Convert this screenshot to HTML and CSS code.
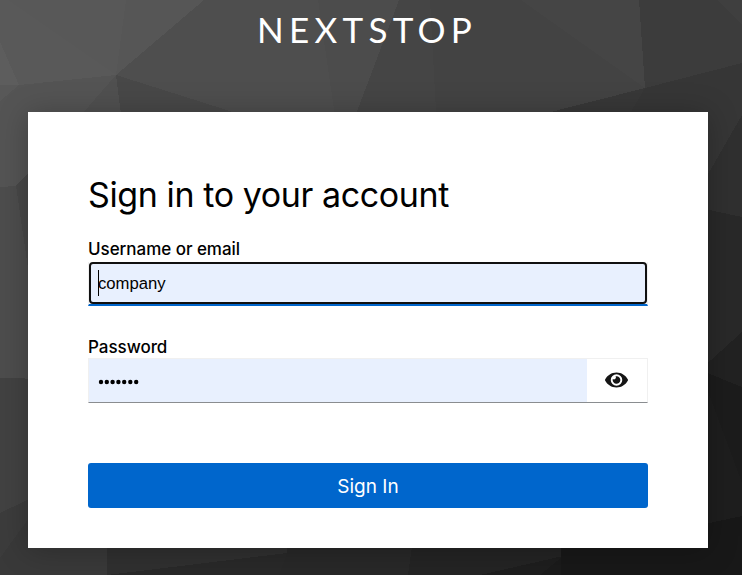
FILE: index.html
```html
<!DOCTYPE html>
<html lang="en">
<head>
<meta charset="utf-8">
<title>Sign in to NextStop</title>
<link rel="stylesheet" href="styles.css">
</head>
<body>
<svg class="backdrop" viewBox="0 0 742 575" shape-rendering="crispEdges" aria-hidden="true">
  <rect width="742" height="575" fill="#303030"/>
  <path fill="#595959" d="M0 0H8L116 75L19 85L0 42Z"/>
  <path fill="#5d5d5d" d="M0 42L19 85H0Z"/>
  <path fill="#585858" d="M8 0H126L116 75Z"/>
  <path fill="#565656" d="M126 0H204L116 75Z"/>
  <path fill="#4e4e4e" d="M204 0H318L337 130H290L116 75Z"/>
  <path fill="#4c4c4c" d="M318 0H399L350 130H337Z"/>
  <path fill="#454545" d="M399 0H430L437 130H350Z"/>
  <path fill="#434343" d="M430 0H521L645 88L480 130H437Z"/>
  <path fill="#454545" d="M521 0H639L645 88Z"/>
  <path fill="#3c3c3c" d="M639 0H717L742 24V63L645 88Z"/>
  <path fill="#3f3f3f" d="M717 0H742V24Z"/>
  <path fill="#383838" d="M645 88L620 130H480Z"/>
  <path fill="#363636" d="M645 88L742 63V115L700 188L665 130H620Z"/>
  <path fill="#484848" d="M116 75L290 130H123Z"/>
  <path fill="#505050" d="M116 75L123 130H68Z"/>
  <path fill="#545454" d="M19 85L116 75L68 130L16 186L0 187V101Z"/>
  <path fill="#585858" d="M0 85H19L0 101Z"/>
  <path fill="#4d4d4d" d="M0 187L16 186L40 350V379L0 378Z"/>
  <path fill="#484848" d="M16 186L50 150V350H40Z"/>
  <path fill="#424242" d="M0 378L50 379V489L0 513Z"/>
  <path fill="#3c3c3c" d="M0 513L50 489L0 558Z"/>
  <path fill="#393939" d="M0 558L50 489L107 535V575H0Z"/>
  <path fill="#303030" d="M107 530H387L287 553L107 574Z"/>
  <path fill="#292929" d="M107 575L287 553L279 575Z"/>
  <path fill="#282828" d="M287 540H415L408 575H279L287 553Z"/>
  <path fill="#242424" d="M413 540H563V556L480 575H408Z"/>
  <path fill="#1e1e1e" d="M563 556L480 575H540Z"/>
  <path fill="#1b1b1b" d="M561 540V575H540L563 556Z"/>
  <path fill="#181818" d="M561 530L742 516V575H561Z"/>
  <path fill="#303030" d="M742 115V217L700 208V188Z"/>
  <path fill="#292929" d="M700 208L742 217V332L700 370Z"/>
  <path fill="#222" d="M700 370L742 332V387Z"/>
  <path fill="#1c1c1c" d="M700 370L742 387V483Z"/>
  <path fill="#1e1e1e" d="M700 370L742 483V516L700 525Z"/>
</svg>
<header class="brand">NEXTSTOP</header>
<main class="card">
  <h1 class="title"><span>Sign in to your account</span></h1>
  <form class="form">
    <label class="label" for="username">Username or email</label>
    <div class="field field-active">
      <div class="ring"><span class="caret"></span><input class="input" id="username" type="text" value="company"></div>
    </div>
    <label class="label label-password" for="password">Password</label>
    <div class="password">
      <div class="secret" id="password" role="textbox" aria-label="Password">
        <svg width="42" height="6" viewBox="0 0 42 6" aria-hidden="true"><g fill="#000"><circle cx="3" cy="3" r="2.2"/><circle cx="8.8" cy="3" r="2.2"/><circle cx="14.6" cy="3" r="2.2"/><circle cx="20.4" cy="3" r="2.2"/><circle cx="26.2" cy="3" r="2.2"/><circle cx="32.3" cy="3" r="2.2"/><circle cx="38.2" cy="3" r="2.2"/></g></svg>
      </div>
      <button class="reveal" type="button" aria-label="Show password">
        <svg width="23" height="16" viewBox="0 0 576 400" aria-hidden="true"><path fill="#151515" fill-rule="evenodd" d="M573 185C518 78 410 10 288 10S58 78 3 185a32 32 0 0 0 0 30c55 107 163 175 285 175s230-68 285-175a32 32 0 0 0 0-30ZM288 344a144 144 0 1 1 0-288 144 144 0 0 1 0 288Zm0-240a95 95 0 0 0-25 4 48 48 0 0 1-67 67 96 96 0 1 0 92-71Z"/></svg>
      </button>
    </div>
    <button class="submit" type="button">Sign In</button>
  </form>
</main>
</body>
</html>
```
FILE: styles.css
```css
* { box-sizing: border-box; }

body {
  margin: 0;
  height: 575px;
  overflow: hidden;
  background: #303030;
  color: #000;
  font-family: Inter, "Liberation Sans", sans-serif;
}

.backdrop {
  position: absolute;
  inset: 0;
  z-index: -1;
  width: 742px;
  height: 575px;
}

.brand {
  height: 112px;
  padding: 4px 0 0 257px;
  color: #fff;
  font: 400 35px/50px Lato, sans-serif;
  letter-spacing: 5.3px;
  white-space: nowrap;
}

.card {
  width: 680px;
  height: 436px;
  margin-left: 28px;
  padding: 60px 60px 0;
  background: #fff;
  box-shadow: 0 2px 28px rgba(0, 0, 0, .25);
}

.title {
  height: 64px;
  margin: 0;
  font-size: 34px;
  font-weight: 400;
  line-height: 46px;
  letter-spacing: -.4px;
  white-space: nowrap;
}

.form { display: flex; flex-direction: column; }

.label {
  height: 26px;
  font-size: 17px;
  font-weight: 500;
  line-height: 27px;
  letter-spacing: -.04px;
}

.field {
  height: 44px;
  border: 1px solid #f0f0f0;
  border-top: 0;
  border-bottom: 2px solid #06c;
}

.ring {
  display: flex;
  align-items: center;
  height: 42px;
  padding: 2px 0 0 7px;
  border: 2px solid #101010;
  border-radius: 4px;
  background: #e8f0fe;
}

.caret { width: 1px; height: 26px; margin-top: -2px; background: #000; }

.input {
  flex: 1;
  min-width: 0;
  margin-left: -1px;
  padding: 0;
  border: 0;
  outline: 0;
  background: transparent;
  color: #000;
  font: 16.7px/24px "Liberation Sans", Arial, sans-serif;
}

.label-password { margin-top: 28px; height: 24px; }

.password { display: flex; height: 45px; }

.secret {
  display: flex;
  align-items: center;
  width: 499px;
  padding: 3px 0 0 9px;
  border: 1px solid #f0f0f0;
  border-right: 0;
  border-bottom-color: #8a8d90;
  background: #e8f0fe;
}

.reveal {
  display: flex;
  flex: 1;
  align-items: center;
  justify-content: center;
  padding: 0 1px 1px 0;
  border: 1px solid #f0f0f0;
  border-left: 0;
  border-bottom-color: #8a8d90;
  background: #fff;
}

.submit {
  height: 45px;
  margin-top: 60px;
  padding: 2px 0 0;
  border: 0;
  border-radius: 3px;
  background: #06c;
  color: #fff;
  font: 400 19px/28px Inter, sans-serif;
}
```
